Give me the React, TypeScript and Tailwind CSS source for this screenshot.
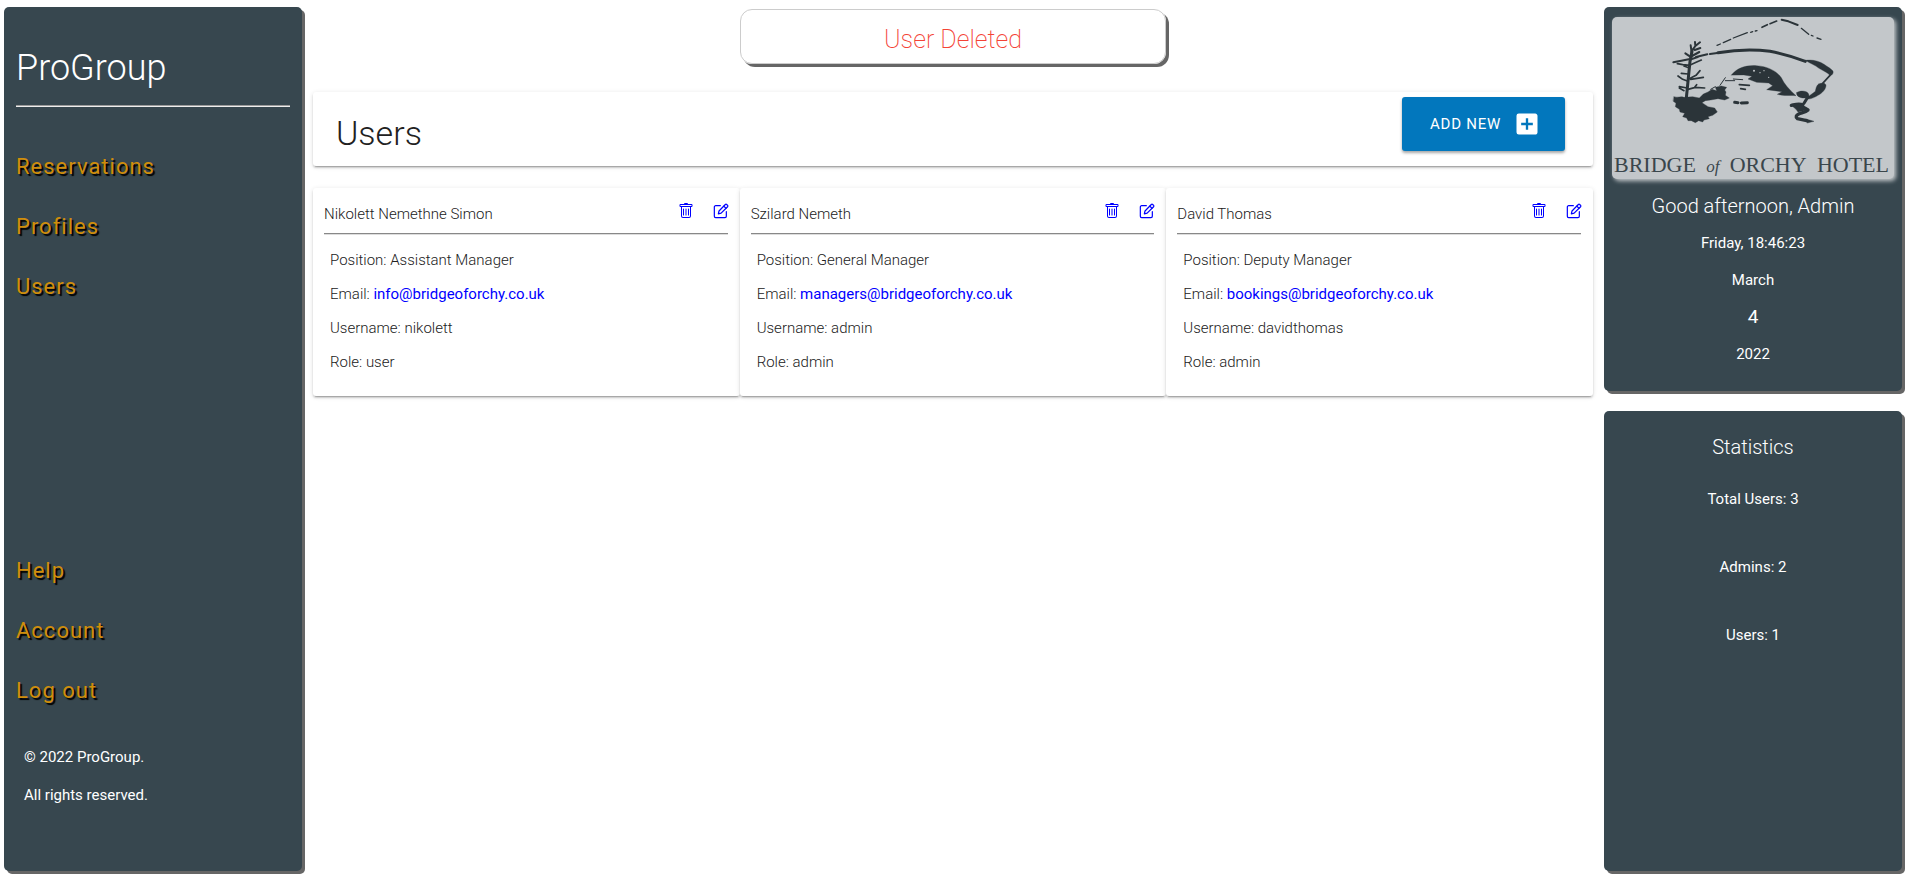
import React from "react";
import { BsTrash } from "react-icons/bs";
import { MdAddBox } from "react-icons/md";

type User = { name: string; position: string; email: string; username: string; role: string };

const users: User[] = [
  { name: "Nikolett Nemethne Simon", position: "Assistant Manager", email: "info@bridgeoforchy.co.uk", username: "nikolett", role: "user" },
  { name: "Szilard Nemeth", position: "General Manager", email: "managers@bridgeoforchy.co.uk", username: "admin", role: "admin" },
  { name: "David Thomas", position: "Deputy Manager", email: "bookings@bridgeoforchy.co.uk", username: "davidthomas", role: "admin" },
];

const panel = "rounded-[5px] bg-[#37474f] text-white shadow-[3px_3px_0_#666]";
const card = "rounded-[3px] bg-white shadow-[0_3px_1px_-2px_rgba(0,0,0,0.2),0_2px_2px_0_rgba(0,0,0,0.14),0_1px_5px_0_rgba(0,0,0,0.12)]";

function EditIcon() {
  return (
    <svg width="16" height="16" viewBox="0 0 24 24" fill="none" stroke="currentColor" strokeWidth="1.8" strokeLinecap="round" strokeLinejoin="round" aria-hidden="true">
      <path d="M11 4H4a2 2 0 0 0-2 2v14a2 2 0 0 0 2 2h14a2 2 0 0 0 2-2v-7" />
      <path d="M18.5 2.2a1.4 1.4 0 0 1 2 0l1.4 1.4a1.4 1.4 0 0 1 0 2L12.2 15.2 8 16.2l1-4.2z" />
      <path d="M16.2 4.7l3.2 3.2" />
    </svg>
  );
}

function HotelLogo() {
  return (
    <figure className="w-full rounded-[5px] bg-[#c3c7ca] text-[#2b3439] shadow-[2px_2px_4px_#c3c7ca]">
      <svg viewBox="52 51 846 408" className="block w-full" fill="currentColor" stroke="currentColor" strokeLinecap="round" strokeLinejoin="round" role="img" aria-label="Stone bridge beside a pine tree">
        <g fill="none" strokeWidth="4">
          <path d="M367 136l10-4M386 128l22-10M416 114l42-16M468 97l6-2M482 93l5-1" />
          <path d="M502 82l16-8M526 71l20-8" strokeWidth="5" />
          <path d="M561 59l20 5 28 11" strokeWidth="6" />
          <path d="M620 85l22 18M650 106l5 2M667 114l12 4" />
        </g>
        <g fill="none">
          <path d="M304 171l34-8M346 162l22-3" strokeWidth="6" />
          <path d="M370 158c50-8 110-10 156-4 40 8 74 18 106 30" strokeWidth="9" />
        </g>
        <path d="M632 181c20-3 42 2 56 12 12 8 22 14 27 20 2 7-2 12-8 14-8-9-22-15-34-22-12-10-26-14-41-24z" />
        <path d="M410 225c18-22 44-30 76-28 32 2 60 16 74 36 8 18 24 36 44 54-20-2-36 2-56-4l14-8-46-6 18-12-12-8-36-2-26-10 12-8-24-4z" />
        <g fill="#c3c7ca" stroke="none">
          <circle cx="478" cy="212" r="3" />
          <circle cx="496" cy="218" r="2" />
          <circle cx="508" cy="212" r="2" />
          <circle cx="522" cy="232" r="2" />
        </g>
        <g fill="none">
          <path d="M376 256l16-23M392 242l28 0M416 237l28 2M348 268l14-8" strokeWidth="3" />
          <path d="M434 254l30 2M438 266l14 2" strokeWidth="5" />
          <path d="M420 307l10 1M440 309l18-1" strokeWidth="9" />
        </g>
        <path d="M706 226l-22 24" fill="none" strokeWidth="5" />
        <path d="M672 252c10-4 20-4 22 4 0 12-12 24-24 30-8 5-24 14-34 10 6-10 18-14 26-22 2-8 2-16 10-22z" />
        <path d="M606 278c10-8 32-6 36 4 2 8-4 12-14 12-12 0-24-6-22-16z" />
        <path d="M640 290l-12 20" fill="none" strokeWidth="9" />
        <path d="M590 316c10-2 20-6 34-2-2 8 4 8 16 16-8 8-22 8-28 12-8 4-10 10-4 14l28 6" fill="none" strokeWidth="10" />
        <path d="M590 316l34-2 14 16-28 6-6-8z" />
        <path d="M634 357l24 7-20 5z" />
        <g fill="none" strokeWidth="6">
          <path d="M275 294l6-60 5-50 6-30" strokeWidth="9" />
          <path d="M291 158l-3-22M292 152l10-14-1-12M302 138l14-11M300 150l17-6M290 172l-18-12M292 168l22-12M289 178l20-7M236 187l24-5 22-4" />
          <path d="M286 196l-22-2-16-3M288 194l18-8 14-6M284 204l-16-6M280 244l-16-6-14-10M284 236l20-10 12-14M288 238l38-6M280 222l-20-2M278 264l-24-4M280 268l22-6 28 2M268 272l-14-8M300 262l6-8" strokeWidth="5" />
        </g>
        <path d="M238 290c14 4 18-2 30 2l26-2 20 4 12-12 14-6 12-8 14 4-4-10 18-4 16 4-6 8 4 6-2 10 12 8-14 6-20-4-22 4-16 2-10 6 18 12 20 4 8 12-14 10-14 4 4 6-16 4-4 6-12-4-10 6-12-6-10 0-4-8-12-4 6-10-14-4-2-8-12-8 2-10-8-6z" />
      </svg>
      <figcaption className="flex items-baseline justify-between pr-[5px] pl-[2px] font-['Liberation_Serif',serif] text-[22px] leading-6 text-[#3a464c]">
        <span>BRIDGE</span>
        <em className="text-[17px]">of</em>
        <span>ORCHY</span>
        <span>HOTEL</span>
      </figcaption>
    </figure>
  );
}

function NavLinks({ items }: { items: string[] }) {
  return (
    <ul className="flex flex-col gap-8">
      {items.map((item) => (
        <li key={item}>
          <a href="#" className="block text-[22px] leading-7 tracking-[1px] text-[#d08e0b] [text-shadow:2px_2px_1px_#000]">
            {item}
          </a>
        </li>
      ))}
    </ul>
  );
}

function Sidebar() {
  return (
    <aside className={`${panel} flex w-[298px] shrink-0 flex-col px-3 pt-[37px]`}>
      <h1 className="text-4xl leading-12 font-light">ProGroup</h1>
      <hr className="mt-[13px] border-t border-b border-t-[#9a9a9a] border-b-[#eee]" />
      <nav className="mt-[46px] flex grow flex-col justify-between">
        <NavLinks items={["Reservations", "Profiles", "Users"]} />
        <NavLinks items={["Help", "Account", "Log out"]} />
      </nav>
      <footer className="mt-10 mb-16 flex flex-col gap-[14px] px-2 text-[15px] leading-6">
        <p>© 2022 ProGroup.</p>
        <p>All rights reserved.</p>
      </footer>
    </aside>
  );
}

function UserCard({ user }: { user: User }) {
  return (
    <article className={`${card} pt-3 pr-3 pb-[22px] pl-[11px]`}>
      <header className="flex items-start justify-between border-b border-[#888] pb-[7px] shadow-[0_1px_0_#ddd]">
        <h3 className="pt-[2px] text-[15px] leading-6 font-light">{user.name}</h3>
        <div className="-mr-px flex items-start gap-[19px] pt-[3px] text-[#0000ff]">
          <button type="button" aria-label={`Delete ${user.name}`}><BsTrash size={16} /></button>
          <button type="button" aria-label={`Edit ${user.name}`}><EditIcon /></button>
        </div>
      </header>
      <div className="mt-[14px] flex flex-col gap-[10px] px-[6px] text-[15px] leading-6 font-light">
        <p>Position: {user.position}</p>
        <p>Email: <a href={`mailto:${user.email}`} className="font-normal text-[#0000ff]">{user.email}</a></p>
        <p>Username: {user.username}</p>
        <p>Role: {user.role}</p>
      </div>
    </article>
  );
}

export default function App() {
  return (
    <div className="flex min-h-screen gap-[11px] bg-white pt-[7px] pr-[6px] pb-1 pl-1 font-[Roboto,sans-serif] text-[#212121]">
      <Sidebar />
      <main className="min-w-0 grow pt-[2px]">
        <div role="status" className="mx-auto w-1/3 rounded-xl border border-[#ccc] pt-3 pb-[5px] text-center text-[25px] leading-9 font-extralight text-[#f44336] shadow-[3px_3px_0_#666]">
          User Deleted
        </div>
        <section className={`${card} mt-7 flex items-start justify-between pt-[5px] pr-7 pb-3 pl-[23px]`}>
          <h2 className="pt-[15px] text-[34px] leading-[42px] font-light">Users</h2>
          <button type="button" className="flex h-[54px] items-center gap-3 rounded-[3px] bg-[#0277bd] pr-6 pl-7 text-[15px] tracking-wider text-white shadow-[0_2px_3px_rgba(0,0,0,0.35)]">
            ADD NEW
            <MdAddBox size={28} />
          </button>
        </section>
        <section className="mt-[22px] grid grid-cols-3">
          {users.map((user) => <UserCard key={user.username} user={user} />)}
        </section>
      </main>
      <aside className="flex w-[298px] shrink-0 flex-col gap-5">
        <section className={`${panel} px-2 pt-[10px] pb-[23px]`}>
          <HotelLogo />
          <div className="mt-[13px] flex flex-col items-center gap-[9px] text-[15px] leading-7">
            <h2 className="text-xl leading-7 font-light">Good afternoon, Admin</h2>
            <p>Friday, 18:46:23</p>
            <p>March</p>
            <p className="text-[19px] leading-7">4</p>
            <p>2022</p>
          </div>
        </section>
        <section className={`${panel} flex grow flex-col items-center pt-[22px]`}>
          <h2 className="text-xl leading-7 font-light">Statistics</h2>
          <div className="mt-6 flex flex-col items-center gap-10 text-[15px] leading-7">
            <p>Total Users: 3</p>
            <p>Admins: 2</p>
            <p>Users: 1</p>
          </div>
        </section>
      </aside>
    </div>
  );
}
